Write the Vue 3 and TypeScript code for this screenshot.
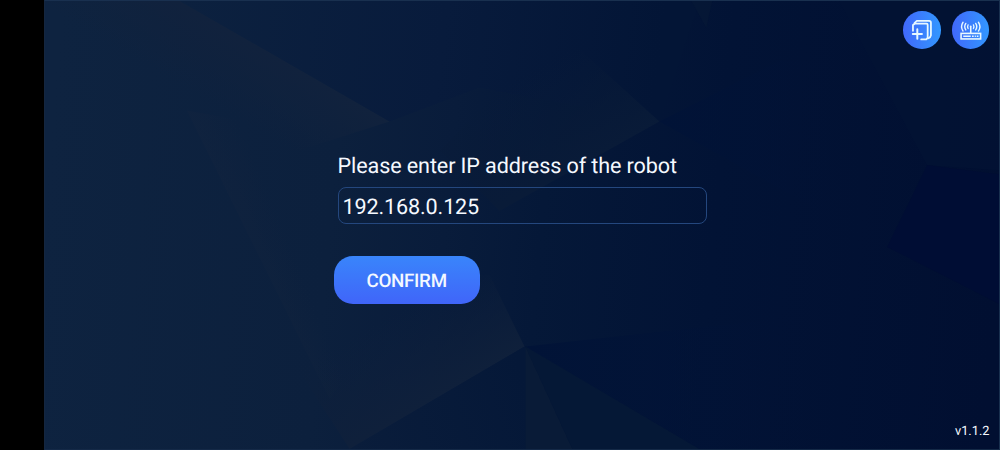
<script setup lang="ts">
import { ref } from 'vue'

const address = ref('192.168.0.125')
const version = 'v1.1.2'
</script>

<template>
  <main class="screen">
    <div class="cutout"></div>
    <section class="stage">
      <svg class="backdrop" viewBox="45 0 955 450" preserveAspectRatio="none" aria-hidden="true">
        <defs>
          <linearGradient id="base" gradientUnits="userSpaceOnUse" x1="45" y1="180" x2="1000" y2="270">
            <stop offset="0" stop-color="#0e2340" />
            <stop offset="0.3" stop-color="#0c203d" />
            <stop offset="0.42" stop-color="#091c3b" />
            <stop offset="0.52" stop-color="#051838" />
            <stop offset="0.7" stop-color="#021335" />
            <stop offset="1" stop-color="#010f31" />
          </linearGradient>
          <linearGradient id="leftFacet" gradientUnits="userSpaceOnUse" x1="285" y1="60" x2="248" y2="124">
            <stop offset="0" stop-color="#11223d" />
            <stop offset="1" stop-color="#11223d" stop-opacity="0" />
          </linearGradient>
          <linearGradient id="topFacet" gradientUnits="userSpaceOnUse" x1="180" y1="0" x2="660" y2="60">
            <stop offset="0" stop-color="#0c213f" />
            <stop offset="0.55" stop-color="#081b3c" />
            <stop offset="1" stop-color="#031536" />
          </linearGradient>
          <linearGradient id="midFacet" gradientUnits="userSpaceOnUse" x1="580" y1="166" x2="530" y2="70">
            <stop offset="0" stop-color="#091b38" />
            <stop offset="1" stop-color="#091b38" stop-opacity="0" />
          </linearGradient>
          <linearGradient id="lowFacet" gradientUnits="userSpaceOnUse" x1="437" y1="399" x2="390" y2="316">
            <stop offset="0" stop-color="#0f203b" />
            <stop offset="1" stop-color="#0f203b" stop-opacity="0" />
          </linearGradient>
          <linearGradient id="ridge" gradientUnits="userSpaceOnUse" x1="245" y1="240" x2="282" y2="225">
            <stop offset="0" stop-color="#12233e" stop-opacity="0.5" />
            <stop offset="1" stop-color="#12233e" stop-opacity="0" />
          </linearGradient>
          <linearGradient id="rightFade" gradientUnits="userSpaceOnUse" x1="530" y1="350" x2="800" y2="320">
            <stop offset="0" stop-color="#011337" />
            <stop offset="1" stop-color="#011237" stop-opacity="0" />
          </linearGradient>
          <linearGradient id="peakFade" gradientUnits="userSpaceOnUse" x1="660" y1="120" x2="830" y2="120">
            <stop offset="0" stop-color="#011337" />
            <stop offset="1" stop-color="#011236" stop-opacity="0" />
          </linearGradient>
          <linearGradient id="footFacet" gradientUnits="userSpaceOnUse" x1="350" y1="450" x2="530" y2="400">
            <stop offset="0" stop-color="#0a1d3b" />
            <stop offset="1" stop-color="#051838" />
          </linearGradient>
        </defs>
        <rect x="45" width="955" height="450" fill="url(#base)" />
        <path d="M45 0H180L390 121L300 150L45 150Z" fill="url(#leftFacet)" />
        <path d="M180 0H700L660 121L480 87L390 121Z" fill="url(#topFacet)" />
        <path d="M440 150L560 30L660 121L500 211Z" fill="url(#midFacet)" />
        <path d="M187 110L330 400L400 300L300 130Z" fill="url(#ridge)" />
        <path d="M240 280L350 450L525 347L490 275Z" fill="url(#lowFacet)" />
        <path d="M350 450L525 347L526 450Z" fill="url(#footFacet)" />
        <path d="M526 347V450H573Z" fill="#091b37" />
        <path d="M526 347L573 450H700Z" fill="#051836" />
        <path d="M526 347L700 450H900L860 310Z" fill="url(#rightFade)" />
        <path d="M660 121L780 60L860 60V233Z" fill="url(#peakFade)" />
        <path d="M692 0H713L707 27Z" fill="#071a36" opacity="0.5" />
        <path d="M840 0H1000V170L928 165Z" fill="#031334" opacity="0.75" />
        <path d="M928 165L1000 174V304L888 247Z" fill="#000d34" />
      </svg>

      <nav class="actions">
        <button class="round" type="button" aria-label="Add">
          <svg viewBox="0 0 38 38" aria-hidden="true">
            <g fill="none" stroke="#e8f8ff" stroke-linecap="round" stroke-linejoin="round">
              <path stroke-width="1.8" d="M10.1 20V14.2L12.3 12.7H23.8Q25 12.7 25 13.9V27.2L23.6 28.8H18.4" />
              <path stroke-width="1.8" d="M11.6 12.4L14 10H26.4Q28.3 10 28.3 12V24.6Q28 26.4 25.8 27.6" />
              <path stroke-width="2" d="M9.9 23.4H19.2M14.5 18.6V28.2" />
            </g>
          </svg>
        </button>
        <button class="round" type="button" aria-label="Network">
          <svg viewBox="0 0 38 38" aria-hidden="true">
            <g fill="none" stroke="#e8f8ff" stroke-linecap="round">
              <path stroke-width="1.4" d="M11.2 11.4Q8.2 15.8 11.2 20.3M26.8 11.4Q29.8 15.8 26.8 20.3" />
              <path stroke-width="1.4" d="M14 12.6Q11.8 15.8 14 19.2M24 12.6Q26.2 15.8 24 19.2" />
              <path stroke-width="1.3" d="M16.3 14Q15.3 15.8 16.3 17.8M21.7 14Q22.7 15.8 21.7 17.8" />
              <path stroke-width="1.6" d="M19 15.4V22" />
              <rect x="9.2" y="22.7" width="19.8" height="5.6" stroke-width="1.6" />
              <path stroke-width="1.6" stroke-linecap="butt" d="M11.4 25.5H19M20.2 25.5H22M23 25.5H24.2M25.1 25.5H26.8" />
            </g>
          </svg>
        </button>
      </nav>

      <form class="form" @submit.prevent>
        <label class="label" for="address">Please enter IP address of the robot</label>
        <input id="address" v-model="address" class="field" type="text" spellcheck="false" />
        <button class="confirm" type="submit">CONFIRM</button>
      </form>

      <footer class="version">{{ version }}</footer>
    </section>
  </main>
</template>

<style>
body {
  margin: 0;
  background: #000;
}
</style>

<style scoped>
.screen {
  display: flex;
  width: 1000px;
  height: 450px;
  overflow: hidden;
  background: #000;
  color: #f5f9ff;
  font-family: Roboto, "Liberation Sans", sans-serif;
  text-rendering: geometricPrecision;
}

.cutout {
  width: 44px;
  flex: none;
}

.stage {
  position: relative;
  isolation: isolate;
  flex: 1;
  display: flex;
  flex-direction: column;
  box-sizing: border-box;
  border: 1px solid #19304f;
  border-bottom-color: #142947;
  border-left-color: #14263f;
}

.backdrop {
  position: absolute;
  inset: 0;
  z-index: -1;
  width: 100%;
  height: 100%;
}

.actions {
  display: flex;
  justify-content: flex-end;
  gap: 11px;
  padding: 10px 9.7px 0 0;
}

.round {
  width: 37.5px;
  height: 37.5px;
  padding: 0;
  border: 0;
  border-radius: 50%;
  background: linear-gradient(90deg, #4168fa, #3297ff);
}

.round svg {
  display: block;
  width: 100%;
  height: 100%;
}

.form {
  display: flex;
  flex-direction: column;
  align-items: flex-start;
  margin: 104.5px 0 0 288.6px;
}

.label {
  margin-left: 4px;
  font-size: 21.6px;
  line-height: 28px;
  letter-spacing: -0.12px;
  white-space: nowrap;
}

.field {
  box-sizing: border-box;
  width: 369px;
  height: 37px;
  margin: 6px 0 0 4px;
  padding: 3px 4px 0;
  border: 1px solid #24477e;
  border-radius: 8px;
  outline: 0;
  background: transparent;
  color: inherit;
  font: 21.6px/33px Roboto, "Liberation Sans", sans-serif;
  letter-spacing: -0.15px;
  text-rendering: geometricPrecision;
}

.confirm {
  width: 146px;
  height: 48px;
  margin-top: 32px;
  padding: 3px 0 0;
  border: 0;
  border-radius: 19px;
  background: linear-gradient(#3985fb, #4065f9);
  color: #f3f8ff;
  font: 500 18.8px/45px Roboto, "Liberation Sans", sans-serif;
  letter-spacing: -0.3px;
  text-rendering: geometricPrecision;
}

.version {
  margin: auto 9.5px 9px auto;
  font-size: 12.8px;
  line-height: 16px;
}
</style>
